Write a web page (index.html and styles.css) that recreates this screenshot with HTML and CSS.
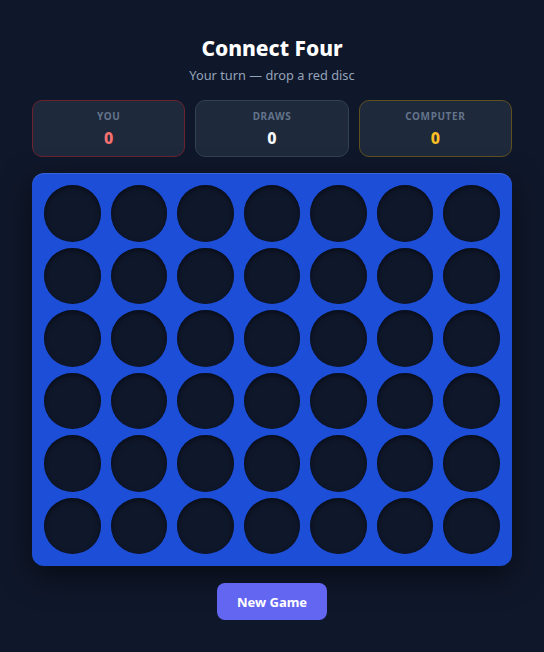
FILE: index.html
```html
<!DOCTYPE html>
<html>
<head>
<meta charset="utf-8">
<link rel="stylesheet" href="styles.css">
</head>
<body>
<div class="app">
  <h1 class="title">Connect Four</h1>
  <p class="status">Your turn — drop a red disc</p>
  <div class="scores">
    <div class="card card-you"><div class="label">You</div><div class="value v-you">0</div></div>
    <div class="card card-draw"><div class="label">Draws</div><div class="value v-draw">0</div></div>
    <div class="card card-cpu"><div class="label">Computer</div><div class="value v-cpu">0</div></div>
  </div>
  <div class="board">
    <div class="cell"></div><div class="cell"></div><div class="cell"></div><div class="cell"></div><div class="cell"></div><div class="cell"></div><div class="cell"></div>
    <div class="cell"></div><div class="cell"></div><div class="cell"></div><div class="cell"></div><div class="cell"></div><div class="cell"></div><div class="cell"></div>
    <div class="cell"></div><div class="cell"></div><div class="cell"></div><div class="cell"></div><div class="cell"></div><div class="cell"></div><div class="cell"></div>
    <div class="cell"></div><div class="cell"></div><div class="cell"></div><div class="cell"></div><div class="cell"></div><div class="cell"></div><div class="cell"></div>
    <div class="cell"></div><div class="cell"></div><div class="cell"></div><div class="cell"></div><div class="cell"></div><div class="cell"></div><div class="cell"></div>
    <div class="cell"></div><div class="cell"></div><div class="cell"></div><div class="cell"></div><div class="cell"></div><div class="cell"></div><div class="cell"></div>
  </div>
  <button class="btn">New Game</button>
</div>
</body>
</html>
```
FILE: styles.css
```css
* { box-sizing: border-box; }
html, body {
  margin: 0;
  background: #0f172a;
  font-family: "Noto Sans", "Open Sans", sans-serif;
  color: #f1f5f9;
}
.app {
  width: 480px;
  margin: 0 auto;
  padding-top: 34px;
  display: flex;
  flex-direction: column;
  align-items: center;
}
.title {
  margin: 0;
  font-size: 21px;
  font-weight: 800;
  line-height: 28px;
  color: #ffffff;
}
.status {
  margin: 4px 0 0;
  font-size: 12.8px;
  line-height: 18px;
  color: #94a3b8;
}
.scores {
  margin-top: 16px;
  width: 100%;
  display: grid;
  grid-template-columns: 1fr 1fr 1fr;
  gap: 10px;
}
.card {
  height: 57px;
  background: #1e293b;
  border: 1px solid #334155;
  border-radius: 10px;
  display: flex;
  flex-direction: column;
  align-items: center;
  padding-top: 8px;
}
.card-you { border-color: #6b2330; }
.card-cpu { border-color: #5f5020; }
.label {
  font-size: 10px;
  font-weight: 700;
  letter-spacing: 0.06em;
  text-transform: uppercase;
  color: #64748b;
  line-height: 14px;
}
.value {
  margin-top: 5px;
  font-size: 16px;
  font-weight: 800;
  line-height: 20px;
}
.v-you { color: #f87171; }
.v-draw { color: #f8fafc; }
.v-cpu { color: #fbbf24; }
.board {
  margin-top: 16px;
  width: 100%;
  background: #1d4ed8;
  border-radius: 12px;
  padding: 12px;
  display: grid;
  grid-template-columns: repeat(7, 1fr);
  column-gap: 10px;
  row-gap: 6px;
  box-shadow: 0 10px 30px rgba(0,0,0,0.5), inset 0 1px 0 rgba(255,255,255,0.12);
}
.cell {
  aspect-ratio: 1;
  border-radius: 50%;
  background: #0f172a;
  box-shadow: inset 0 2px 5px rgba(0,0,0,0.5);
}
.btn {
  margin-top: 17px;
  width: 110px;
  height: 37px;
  border: none;
  border-radius: 8px;
  background: #6366f1;
  color: #fff;
  font-family: "Noto Sans", sans-serif;
  font-size: 13px;
  font-weight: 700;
}
```
